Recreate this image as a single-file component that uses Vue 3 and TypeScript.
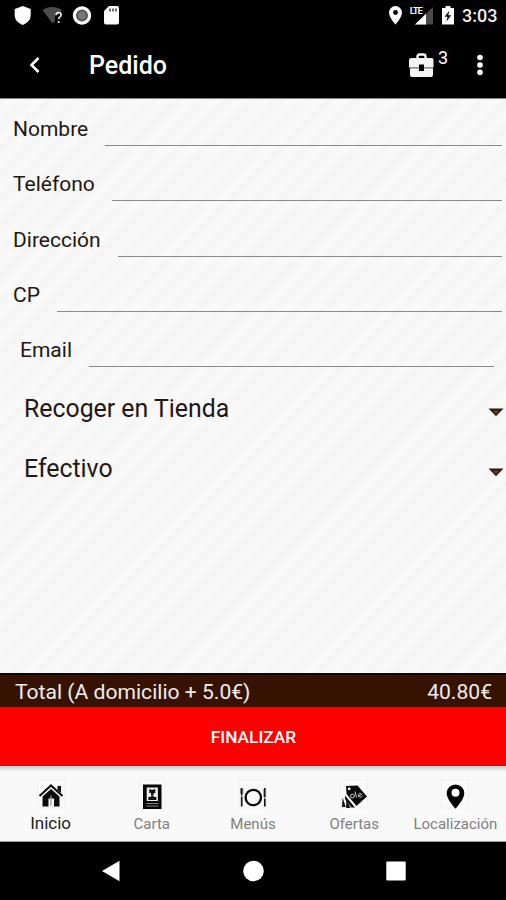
<script setup lang="ts">
interface Field {
  id: string
  label: string
}

const fields: Field[] = [
  { id: 'nombre', label: 'Nombre' },
  { id: 'telefono', label: 'Teléfono' },
  { id: 'direccion', label: 'Dirección' },
  { id: 'cp', label: 'CP' },
  { id: 'email', label: 'Email' },
]

const selects: string[] = ['Recoger en Tienda', 'Efectivo']

const tabs: Field[] = [
  { id: 'inicio', label: 'Inicio' },
  { id: 'carta', label: 'Carta' },
  { id: 'menus', label: 'Menús' },
  { id: 'ofertas', label: 'Ofertas' },
  { id: 'localizacion', label: 'Localización' },
]
</script>

<template>
  <div class="screen">
    <header class="top">
      <div class="status">
        <svg class="status-left" width="130" height="30" viewBox="0 0 130 30">
          <path d="M22.7 6l8 3v6.500c0 4.500-3.500 7.500-8 9.500-4.500-2-8-5-8-9.500V9z" fill="#fff" />
          <path d="M42.500 10c5.500-4 14-4 19.500 0l-3 4-4 1v6l-2.500 2.500z" fill="#4c4c4c" />
          <path d="M56 15.300q.2-2.600 2.600-2.600 2.500 0 2.500 2.300c0 1.900-2.500 1.900-2.500 4.200m0 1.700v2.100" fill="none" stroke="#e8e8e8" stroke-width="1.700" />
          <circle cx="82" cy="15.500" r="7.600" fill="#555" stroke="#fff" stroke-width="3.200" />
          <circle cx="82" cy="15.500" r="4" fill="#777" />
          <path d="M109 6h8q2 0 2 2v14.500q0 2-2 2h-11q-2 0-2-2V11z" fill="#fff" />
          <path d="M110 8.500v3m3-3v3m3-3v3" stroke="#333" stroke-width="1.400" />
        </svg>
        <svg class="status-right" width="75" height="30" viewBox="385 0 75 30">
          <path d="M395.500 6a6.500 6.500 0 0 0-6.500 6.500c0 5 6.500 12 6.500 12s6.500-7 6.500-12a6.500 6.500 0 0 0-6.500-6.500z" fill="#fff" />
          <circle cx="395.500" cy="12.500" r="2.400" fill="#000" />
          <path d="M415 24.500L433 7v17.500z" fill="#4a4a4a" />
          <path d="M415 24.500l11-10.800v10.800z" fill="#fff" />
          <text x="409.800" y="14.300" class="lte">LTE</text>
          <path d="M445.500 8v-2h5v2h3.500v16.500h-12V8z" fill="#fff" />
          <path d="M449.500 10.500l-5 6.200h3l-1.200 5 5-6.500h-3z" fill="#111" />
        </svg>
        <span class="clock">3:03</span>
      </div>
      <div class="toolbar">
        <svg class="back" width="14" height="18" viewBox="0 0 14 18">
          <path d="M11.500 2L4.500 9l7 7" fill="none" stroke="#fff" stroke-width="2.500" />
        </svg>
        <h1>Pedido</h1>
        <div class="cart">
          <svg width="28" height="26" viewBox="0 0 28 26">
            <path d="M9.500 6V4.500q0-2 2-2h4q2 0 2 2V6" fill="none" stroke="#fff" stroke-width="2.300" />
            <path d="M3.500 6h20q2 0 2 2v7.200H16v-2.700h-5v2.700H1V8q0-2 2.500-2z" fill="#f4f4f4" />
            <path d="M2 16.300h9v2.700h5v-2.700h9V23q0 2-2 2H4q-2 0-2-2z" fill="#f4f4f4" />
            <path d="M1 15.200h10v1.100H2zM16 15.200h9v1.100h-9z" fill="#aaa" />
          </svg>
          <span class="count">3</span>
        </div>
        <svg class="more" width="8" height="24" viewBox="0 0 8 24">
          <circle cx="4" cy="4.500" r="2.800" fill="#fff" />
          <circle cx="4" cy="12" r="2.800" fill="#fff" />
          <circle cx="4" cy="19.300" r="2.800" fill="#fff" />
        </svg>
      </div>
    </header>

    <main class="content">
      <form class="fields" @submit.prevent>
        <div v-for="field in fields" :key="field.id" class="field" :class="field.id">
          <label :for="field.id">{{ field.label }}</label>
          <input :id="field.id" type="text" />
        </div>
      </form>
      <div v-for="option in selects" :key="option" class="select">
        <span>{{ option }}</span>
        <svg width="16" height="9" viewBox="0 0 16 9">
          <path d="M.5 .5h15L8 8.300z" fill="#35170b" />
          <path d="M5 2.800h6L8 6z" fill="#70401f" />
        </svg>
      </div>
    </main>

    <div class="total">
      <span>Total (A domicilio + 5.0€)</span>
      <span>40.80€</span>
    </div>
    <button class="finish" type="button">FINALIZAR</button>

    <nav class="tabs">
      <div v-for="tab in tabs" :key="tab.id" class="tab" :class="{ active: tab.id === 'inicio' }">
        <svg width="28" height="30" viewBox="0 0 28 30">
          <rect x=".5" y="1" width="27" height="28" fill="#fafafa" stroke="#f1f1f1" />
          <g v-if="tab.id === 'inicio'">
            <path d="M2.500 17L14 6.500 25.500 17" fill="none" stroke="#111" stroke-width="2.200" />
            <path d="M20.500 7h3.500v7l-3.500-3z" fill="#111" />
            <path d="M5.500 17.500L14 10l8.500 7.500V27.500H17v-8h-5.500v8h-6z" fill="#0a0a0a" />
            <path d="M14 16.500v10" stroke="#999" stroke-width="1.300" />
          </g>
          <g v-else-if="tab.id === 'carta'">
            <rect x="5" y="5.500" width="18.500" height="24.500" fill="#050505" />
            <rect x="8.700" y="8.500" width="11.200" height="13.500" fill="#eee" />
            <path d="M11.300 10l2 .8h2l2-.8v4h-1.700v2.500h-2.600V14h-1.700zM10.300 18h2l1-1h2l1 1h2v3h-8z" fill="#111" />
            <path d="M8.300 24.500h12M8.300 27h12" stroke="#888" stroke-width="1" />
          </g>
          <g v-else-if="tab.id === 'menus'">
            <circle cx="14.300" cy="18.500" r="7.700" fill="none" stroke="#050505" stroke-width="2.300" />
            <path d="M2.700 9v18.500M25.800 9v18.500" stroke="#161616" stroke-width="1.700" />
            <path d="M1.500 9.500v5M4 9.500v5M24.800 10v8" stroke="#444" stroke-width=".6" />
            <path d="M1.500 17h2.500M24.500 19h2.500" stroke="#fff" stroke-width="1.200" />
          </g>
          <g v-else-if="tab.id === 'ofertas'">
            <path d="M6 7L17.500 6.500 27 17.500 16.500 27 6.500 15z" fill="#070707" />
            <circle cx="9.200" cy="9.800" r="1.400" fill="#fff" />
            <circle cx="12.500" cy="17" r="1.900" fill="none" stroke="#ccc" />
            <path d="M15 12.500l1.500 6M18 17.500l3.500-2c-1-2.500-4-.5-3 1.500s3 1 4 0" fill="none" stroke="#ccc" stroke-width="1" />
            <path d="M5 16.500L15 28.500h-3.500L5 20zM2.600 18.500l3.200 9.500H2z" fill="#111" />
            <path d="M6.200 20v9h4.300z" fill="#111" />
          </g>
          <g v-else>
            <path d="M14.500 5.500a8.800 8.800 0 0 0-8.800 8.800c0 6.200 8.800 15.500 8.800 15.500s8.800-9.300 8.800-15.500a8.800 8.800 0 0 0-8.800-8.800z" fill="#030303" />
            <circle cx="14.500" cy="13.800" r="4" fill="#fff" />
          </g>
        </svg>
        <span>{{ tab.label }}</span>
      </div>
    </nav>

    <footer class="system">
      <svg width="20" height="22" viewBox="0 0 20 22"><path d="M1 11L18.500 .8v20.400z" fill="#fff" /></svg>
      <svg width="22" height="22" viewBox="0 0 22 22"><circle cx="10.500" cy="11" r="10.300" fill="#fff" /></svg>
      <svg width="20" height="20" viewBox="0 0 20 20"><rect x=".3" y=".5" width="19.400" height="19" rx="1" fill="#fff" /></svg>
    </footer>
  </div>
</template>

<style>
body {
  margin: 0;
  background: #000;
}
</style>

<style scoped>
.screen {
  width: 506px;
  height: 900px;
  display: flex;
  flex-direction: column;
  overflow: hidden;
  font-family: Roboto, "Liberation Sans", sans-serif;
  color: #231613;
  background: #f8f8f8;
}
svg {
  display: block;
  flex: none;
}
.top {
  height: 98px;
  flex: none;
  background: #000;
  color: #fff;
  border-bottom: 1px solid #858585;
}
.status {
  display: flex;
  height: 32px;
}
.status-right {
  margin-left: 255px;
}
.lte {
  font: bold 9.500px Roboto, sans-serif;
  fill: #eee;
  letter-spacing: -1.1px;
}
.clock {
  margin-left: 2px;
  font-size: 18px;
  font-weight: 500;
  line-height: 32px;
  color: #eee;
}
.toolbar {
  display: flex;
  align-items: center;
  height: 66px;
  padding: 0 22px 0 27px;
}
h1 {
  margin: 2px 0 0 48px;
  font-size: 25px;
  line-height: 32px;
  font-weight: 500;
}
.cart {
  display: flex;
  margin-left: auto;
}
.count {
  margin: -5px 0 0 2px;
  font-size: 18px;
  line-height: 22px;
}
.more {
  margin-left: 28px;
}
.content {
  flex: none;
  height: 574px;
  background: repeating-linear-gradient(135deg, #f5f5f5 0, #f9f9f9 7px, #fafafa 10px, #f5f5f5 18px);
}
.fields {
  padding-top: 2px;
}
.field {
  display: flex;
  height: 55.300px;
  padding: 0 4px 0 13px;
  box-sizing: border-box;
  font-size: 21px;
  line-height: 56px;
}
.field.email {
  padding: 0 12px 0 20px;
}
input {
  flex: 1;
  min-width: 0;
  height: 45px;
  margin-left: 17px;
  padding: 0;
  box-sizing: border-box;
  border: 0;
  border-bottom: 1px solid #8a8a8a;
  border-radius: 0;
  background: transparent;
  outline: none;
}
.select {
  display: flex;
  align-items: center;
  justify-content: space-between;
  height: 60px;
  padding: 0 2px 0 24px;
  font-size: 24.850px;
  position: relative;
  top: 1px;
}
.select svg {
  margin-top: 8px;
}
.total {
  display: flex;
  flex: none;
  justify-content: space-between;
  height: 34px;
  box-sizing: border-box;
  padding: 0 14px 0 15px;
  border-top: 2px solid #0c0300;
  background: #371200;
  color: #eee;
  font-size: 21.100px;
  line-height: 33px;
}
.finish {
  flex: none;
  height: 59px;
  border: 0;
  padding: 0 0 0 1px;
  background: #f00;
  color: #fff;
  font: 500 17.300px Roboto, sans-serif;
}
.tabs {
  flex: none;
  display: grid;
  grid-template-columns: repeat(5, 1fr);
  height: 76px;
  box-sizing: border-box;
  padding-top: 13px;
  background: linear-gradient(#c8c8c8, #f5f5f5 5px, #f9f9f9 7px);
  border-bottom: 1px solid #999;
}
.tab {
  display: flex;
  flex-direction: column;
  align-items: center;
  font-size: 15px;
  line-height: 18px;
  color: #808080;
}
.tab span {
  margin-top: 6px;
}
.tab.active {
  color: #222;
  font-size: 17px;
}
.tab.active span {
  margin-top: 5px;
}
.system {
  display: flex;
  flex: 1;
  align-items: center;
  justify-content: space-between;
  padding: 0 100px 0 101px;
  background: #000;
}
</style>
